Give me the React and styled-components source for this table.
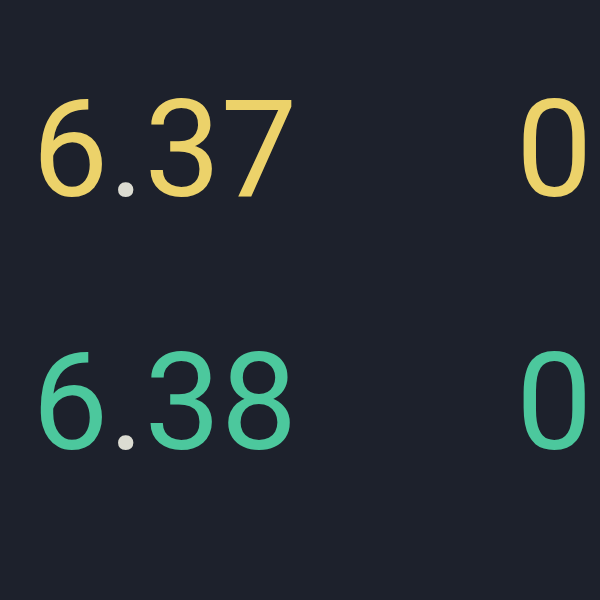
import styled, { createGlobalStyle } from "styled-components";

const Global = createGlobalStyle`
    html, body {
        margin: 0;
        padding: 0;
        background: #1d212c;
    }
    #root {
        width: 600px;
        height: 600px;
        overflow: hidden;
    }
`;

const rows = [
    { price: ["6", "37"], qty: "0.48", side: "ask" },
    { price: ["6", "38"], qty: "0.12", side: "bid" },
];

const App = () => {
    return (
        <>
            <Global />
            <Book>
                {rows.map((row) => (
                    <Row key={row.price.join(".")} side={row.side}>
                        <Price>
                            {row.price[0]}
                            <Dot>.</Dot>
                            {row.price[1]}
                        </Price>
                        <Qty>{row.qty}</Qty>
                    </Row>
                ))}
            </Book>
        </>
    );
};

const Book = styled.div`
    width: 600px;
    height: 600px;
    background: #1d212c;
    padding: 68px 0 0 32px;
    box-sizing: border-box;
    display: flex;
    flex-direction: column;
    gap: 89px;
    overflow: hidden;
`;

const Row = styled.div`
    display: flex;
    align-items: baseline;
    white-space: nowrap;
    font-family: Roboto, "Liberation Sans", sans-serif;
    font-size: 136px;
    line-height: 164px;
    font-weight: 400;
    color: ${(p) => (p.side === "ask" ? "#ecd26a" : "#4cc89d")};
`;

const Price = styled.span`
    width: 484px;
    flex-shrink: 0;
`;

const Dot = styled.span`
    color: #dcdcd2;
`;

const Qty = styled.span``;

export default App;
